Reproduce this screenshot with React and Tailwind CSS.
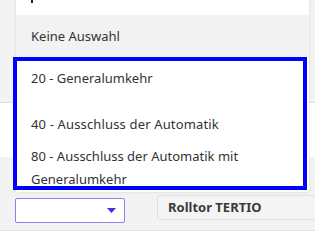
import React from 'react';

const items = [
  { label: '20 - Generalumkehr', cls: 'pt-[6px] pb-[23px]' },
  { label: '40 - Ausschluss der Automatik', cls: 'pb-[9px] tracking-[0.15px]' },
  { label: '80 - Ausschluss der Automatik mit Generalumkehr', cls: '' },
];

export default function App() {
  return (
    <div className="relative w-[315px] h-[240px] overflow-hidden bg-white font-['Noto_Sans',sans-serif] text-[13px] text-[#333]">
      {/* page behind the menu */}
      <div className="h-[103px] bg-[#f3f3f3] border-b border-[#dedede]"></div>
      <div className="h-[54px] bg-white"></div>
      <div className="h-[74px] bg-[#f3f3f3] border-b border-[#e2e2e2] flex items-start gap-[32px] pl-[15px] pt-[38px]">
        <div className="mt-[3px] w-[110px] h-[25px] bg-white border border-[#8b7ff6] rounded-[2px] flex items-center justify-end pr-[8px]">
          <svg width="9" height="5" viewBox="0 0 9 5"><path d="M0 0h9L4.5 5z" fill="#3f2fe8" /></svg>
        </div>
        <div className="flex-1 -mr-[6px] h-[25px] bg-[#f4f4f4] border border-[#e0e0e0] rounded-[3px] flex items-center pl-[10px] font-bold text-[#3a3a3a]">
          Rolltor TERTIO
        </div>
      </div>

      {/* open dropdown menu */}
      <div className="absolute left-[16px] top-0 w-[293px] h-[192px] bg-white shadow-[0_0_3px_rgba(0,0,0,0.12)]">
        <div className="h-[15px] pl-[15px]">
          <div className="w-[2px] h-[3px] bg-[#222]"></div>
        </div>
        <div className="h-[42px] bg-[#f2f2f2] flex items-center pl-[15px] pt-[1px]">Keine Auswahl</div>
        <div className="-ml-[3px] w-[294px] h-[133px] border-[4px] border-[#0000ff] bg-white overflow-hidden px-[14px] leading-[23px]">
          {items.map((it) => (
            <div key={it.label} className={it.cls}>{it.label}</div>
          ))}
        </div>
      </div>
    </div>
  );
}
